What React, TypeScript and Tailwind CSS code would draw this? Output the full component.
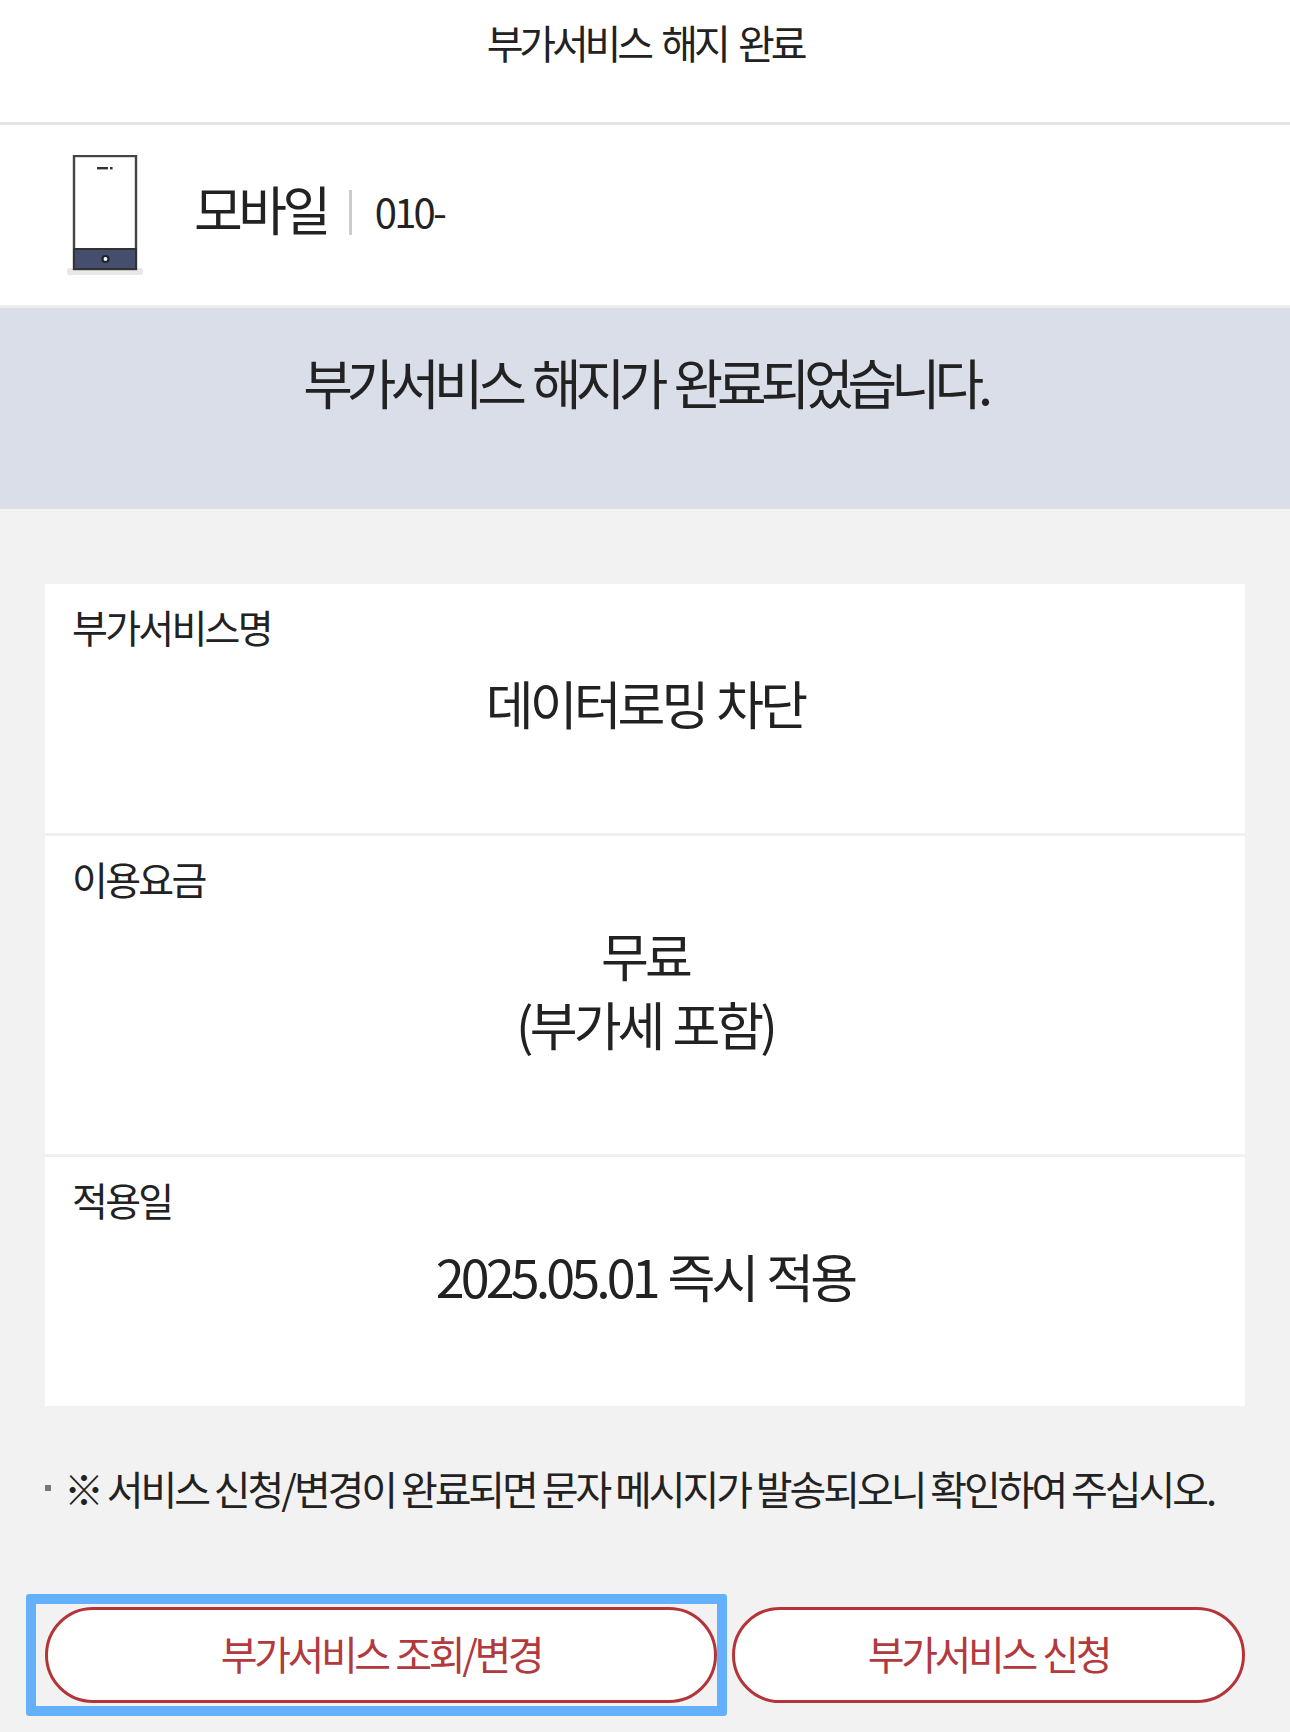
const font = { fontFamily: '"Noto Sans CJK KR", "Noto Sans", sans-serif' }

function PhoneIcon() {
  return (
    <svg width="84" height="122" viewBox="0 0 84 122" className="block">
      <rect x="1" y="113" width="76" height="7" rx="2.5" fill="#e8e8e8" />
      <rect x="8" y="1" width="62" height="113" fill="#fff" stroke="#444446" strokeWidth="2.4" />
      <rect x="8" y="94" width="62" height="20" fill="#454e6c" stroke="#333" strokeWidth="2" />
      <rect x="31" y="12" width="11" height="2.4" fill="#333" />
      <rect x="44" y="12" width="2.6" height="2.4" fill="#333" />
      <circle cx="39.5" cy="104" r="3" fill="#fff" stroke="#1f2230" strokeWidth="2.2" />
    </svg>
  )
}

function InfoRow({ label, lines, height, last }: { label: string; lines: string[]; height: string; last?: boolean }) {
  return (
    <div className={`${height} ${last ? '' : 'border-b-[3px] border-[#f0f0f0]'} px-[27px] pt-[17px]`}>
      <div className="text-[39px] leading-[50px] tracking-[-0.07em] text-[#222]">{label}</div>
      <div className="mt-[17px] text-center text-[52px] leading-[69px] tracking-[-0.075em] [word-spacing:0.06em] text-[#222]">
        {lines.map((l) => (
          <div key={l}>{l}</div>
        ))}
      </div>
    </div>
  )
}

export default function App() {
  return (
    <div className="w-[1290px] h-[1732px] bg-[#f2f2f2] overflow-hidden" style={font}>
      {/* 상단 타이틀 */}
      <div className="h-[125px] bg-white border-b-[3px] border-[#e5e5e5] pt-[14px] text-center text-[40px] leading-[56px] tracking-[-0.105em] [word-spacing:0.17em] text-[#222]">
        부가서비스 해지 완료
      </div>

      {/* 회선 정보 */}
      <div className="h-[183px] bg-white border-b-[3px] border-[#eeeeee] flex items-start pl-[66px] pt-[30px]">
        <PhoneIcon />
        <div className="ml-[44px] mt-[16px] flex items-center">
          <span className="text-[53px] leading-[74px] tracking-[-0.085em] text-[#222]">모바일</span>
          <span className="ml-[22px] mt-[8px] w-[3px] h-[45px] bg-[#cccccc]" />
          <span className="ml-[23px] mt-[6px] text-[40px] leading-[56px] tracking-[-0.07em] text-[#222]">010-</span>
        </div>
      </div>

      {/* 완료 안내 */}
      <div className="h-[201px] bg-[#dadee8] pt-[37px] text-center text-[54px] leading-[74px] tracking-[-0.115em] [word-spacing:0.1em] text-[#222]">
        부가서비스 해지가 완료되었습니다.
      </div>

      {/* 상세 */}
      <div className="mx-[45px] mt-[75px] bg-white">
        <InfoRow label="부가서비스명" lines={['데이터로밍 차단']} height="h-[252px]" />
        <InfoRow label="이용요금" lines={['무료', '(부가세 포함)']} height="h-[321px]" />
        <InfoRow label="적용일" lines={['2025.05.01 즉시 적용']} height="h-[249px]" last />
      </div>

      {/* 유의사항 */}
      <div className="mt-[56px] ml-[45px] flex items-center">
        <span className="w-[6px] h-[6px] bg-[#777]" />
        <span className="ml-[13px] text-[40px] leading-[52px] tracking-[-0.077em] text-[#222]">
          ※ 서비스 신청/변경이 완료되면 문자 메시지가 발송되오니 확인하여 주십시오.
        </span>
      </div>

      {/* 버튼 */}
      <div className="mt-[93px] mx-[45px] flex gap-[15px] h-[96px]">
        <div className="relative w-[672px]">
          <button className="w-full h-full pb-[4px] rounded-full bg-white border-[3px] border-[#b43438] text-[40px] tracking-[-0.085em] [word-spacing:0.05em] text-[#b23a3e]">
            부가서비스 조회/변경
          </button>
          <div className="absolute left-[-19px] top-[-13px] w-[701px] h-[122px] border-[10px] border-[#64b0fa] rounded-[3px] pointer-events-none" />
        </div>
        <button className="flex-1 h-full pb-[4px] rounded-full bg-white border-[3px] border-[#b43438] text-[40px] tracking-[-0.085em] [word-spacing:0.05em] text-[#b23a3e]">
          부가서비스 신청
        </button>
      </div>
    </div>
  )
}
